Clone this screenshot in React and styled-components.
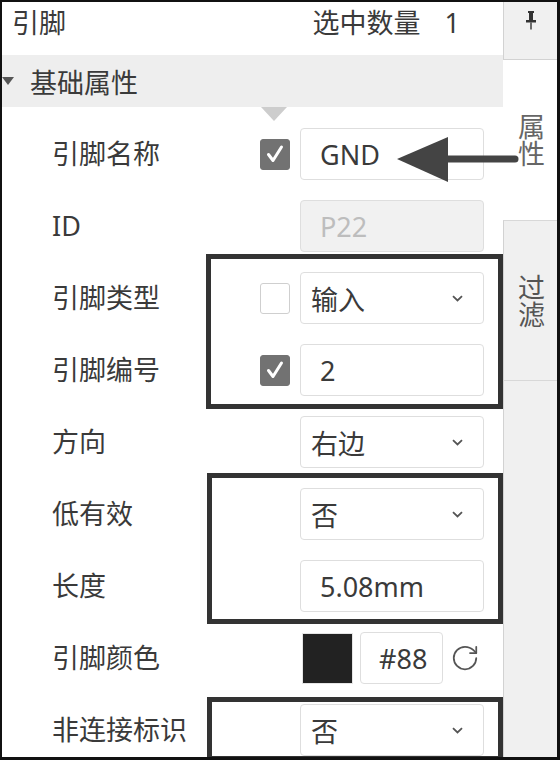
import React from "react";
import styled, { createGlobalStyle } from "styled-components";
import { RotateCw } from "lucide-react";

const Global = createGlobalStyle`
  html, body { margin: 0; padding: 0; background: #fff; }
  body { font-family: "Noto Sans", "Noto Sans CJK SC", sans-serif; }
  * { box-sizing: border-box; }
`;

const Root = styled.div`
  position: relative;
  width: 560px;
  height: 760px;
  border: 2px solid #111;
  border-right-width: 3px;
  border-bottom-width: 3px;
  display: flex;
  overflow: hidden;
  background: #fff;
  font-family: "Noto Sans", "Noto Sans CJK SC", sans-serif;
  font-size: 27px;
  color: #3a3a3a;
`;

const Main = styled.div`
  width: 501px;
  display: flex;
  flex-direction: column;
  & > * { flex-shrink: 0; }
`;

const Header = styled.div`
  height: 53px;
  display: flex;
  justify-content: space-between;
  align-items: flex-start;
  padding: 3px 43px 0 10px;
  line-height: 36px;
`;

const Count = styled.div`
  display: flex;
  gap: 24px;
`;

const Section = styled.div`
  height: 52px;
  background: #eeeeee;
  display: flex;
  align-items: center;
  gap: 16px;
  color: #3a3a3a;
`;

const Caret = styled.span`
  width: 0;
  height: 0;
  border-left: 6px solid transparent;
  border-right: 6px solid transparent;
  border-top: 8px solid #555;
`;

const Rows = styled.div`
  padding-top: 11px;
  display: flex;
  flex-direction: column;
  & > * { flex-shrink: 0; }
`;

const Row = styled.div`
  height: 72px;
  display: grid;
  grid-template-columns: 1fr 30px 184px;
  column-gap: 10px;
  align-items: center;
  padding: 0 19px 0 50px;
`;

const Label = styled.div`
  color: #3a3a3a;
  white-space: nowrap;
  line-height: 36px;
`;

const Check = styled.span`
  width: 30px;
  height: 31px;
  border-radius: 3px;
  display: flex;
  align-items: center;
  justify-content: center;
  background: ${(p) => (p.$on ? "#727272" : "#fff")};
  border: 1px solid ${(p) => (p.$on ? "#727272" : "#cfcfcf")};
`;

const Field = styled.div`
  height: 52px;
  border: 1px solid #dedede;
  border-radius: 4px;
  display: flex;
  align-items: center;
  justify-content: space-between;
  padding: 0 20px 0 ${(p) => (p.$select ? "10px" : "19px")};
  background: ${(p) => (p.$disabled ? "#f1f1f1" : "#fff")};
  color: ${(p) => (p.$disabled ? "#bdbdbd" : "#3a3a3a")};
  white-space: nowrap;
  overflow: hidden;
`;

const ColorCell = styled.div`
  display: flex;
  align-items: center;
  padding-left: 2px;
`;

const Swatch = styled.span`
  width: 51px;
  height: 51px;
  background: #222;
  border: 1px solid #e5e5e5;
`;

const Hex = styled.div`
  margin-left: 7px;
  width: 83px;
  height: 52px;
  border: 1px solid #dedede;
  border-radius: 4px;
  display: flex;
  align-items: center;
  padding-left: 18px;
  overflow: hidden;
  white-space: nowrap;
  color: #3a3a3a;
`;

const Reset = styled.span`
  margin-left: 7px;
  display: flex;
  color: #555;
`;

const Tabs = styled.div`
  width: 54px;
  display: flex;
  flex-direction: column;
  & > * { flex-shrink: 0; }
`;

const PinTab = styled.div`
  height: 58px;
  background: #f0f0f0;
  border-left: 1px solid #d2d2d2;
  border-bottom: 1px solid #d2d2d2;
  display: flex;
  justify-content: center;
  padding-top: 9px;
`;

const Tab = styled.div`
  height: 160px;
  display: flex;
  align-items: center;
  justify-content: center;
  background: ${(p) => (p.$active ? "#fff" : "#f0f0f0")};
  border-left: 1px solid ${(p) => (p.$active ? "#fff" : "#d2d2d2")};
  border-top: ${(p) => (p.$active ? "none" : "1px solid #d8d8d8")};
  color: ${(p) => (p.$active ? "#666" : "#555")};
`;

const TabText = styled.span`
  writing-mode: vertical-rl;
  text-orientation: upright;
  line-height: 1;
`;

const TabRest = styled.div`
  flex: 1 1 auto !important;
  background: #f0f0f0;
  border-left: 1px solid #d2d2d2;
  border-top: 1px solid #d8d8d8;
`;

const Frame = styled.div`
  position: absolute;
  border: 5px solid #333;
  pointer-events: none;
`;

const Pointer = styled.span`
  position: absolute;
  left: 259px;
  top: 105px;
  width: 0;
  height: 0;
  border-left: 13px solid transparent;
  border-right: 13px solid transparent;
  border-top: 14px solid #cdcdcd;
`;

const ArrowSvg = styled.svg`
  position: absolute;
  left: 391px;
  top: 132px;
`;

const Chevron = () => (
  <svg width="11" height="7" viewBox="0 0 11 7">
    <path d="M1 1.2l4.5 4.3L10 1.2" fill="none" stroke="#555" strokeWidth="1.8" />
  </svg>
);

const Tick = () => (
  <svg width="20" height="20" viewBox="0 0 20 20">
    <path d="M3.5 10.5l4.5 6L16.5 3" fill="none" stroke="#fff" strokeWidth="3" strokeLinecap="round" strokeLinejoin="round" />
  </svg>
);

const PinIcon = () => (
  <svg width="10" height="19" viewBox="0 0 10 19">
    <rect x="2" y="0" width="6" height="2" fill="#333" />
    <rect x="3" y="2" width="4" height="7" fill="#333" />
    <rect x="0" y="9" width="10" height="2.5" fill="#333" />
    <rect x="4.3" y="11.5" width="1.4" height="7" fill="#333" />
  </svg>
);

const rows = [
  { label: "引脚名称", check: true, value: "GND" },
  { label: "ID", value: "P22", disabled: true },
  { label: "引脚类型", check: false, value: "输入", select: true },
  { label: "引脚编号", check: true, value: "2" },
  { label: "方向", value: "右边", select: true },
  { label: "低有效", value: "否", select: true },
  { label: "长度", value: "5.08mm" },
  { label: "引脚颜色", color: true },
  { label: "非连接标识", value: "否", select: true },
];

export default function App() {
  return (
    <>
      <Global />
      <Root>
        <Main>
          <Header>
            <span>引脚</span>
            <Count>
              <span>选中数量</span>
              <span>1</span>
            </Count>
          </Header>
          <Section>
            <Caret />
            <span>基础属性</span>
          </Section>
          <Rows>
            {rows.map((r) => (
              <Row key={r.label}>
                <Label>{r.label}</Label>
                {r.check === undefined ? (
                  <span />
                ) : (
                  <Check $on={r.check}>{r.check && <Tick />}</Check>
                )}
                {r.color ? (
                  <ColorCell>
                    <Swatch />
                    <Hex>#88</Hex>
                    <Reset>
                      <RotateCw size={30} strokeWidth={1.4} />
                    </Reset>
                  </ColorCell>
                ) : (
                  <Field $select={r.select} $disabled={r.disabled}>
                    <span>{r.value}</span>
                    {r.select && <Chevron />}
                  </Field>
                )}
              </Row>
            ))}
          </Rows>
        </Main>
        <Tabs>
          <PinTab>
            <PinIcon />
          </PinTab>
          <Tab $active>
            <TabText>属性</TabText>
          </Tab>
          <Tab>
            <TabText>过滤</TabText>
          </Tab>
          <TabRest />
        </Tabs>

        <Pointer />
        <Frame style={{ left: 204, top: 252, width: 297, height: 155 }} />
        <Frame style={{ left: 205, top: 471, width: 296, height: 151 }} />
        <Frame style={{ left: 205, top: 695, width: 296, height: 64 }} />
        <ArrowSvg width="130" height="52" viewBox="0 0 130 52">
          <line x1="50" y1="25" x2="122" y2="25" stroke="#444" strokeWidth="7" strokeLinecap="round" />
          <polygon points="4,25 55,3 55,48" fill="#444" />
        </ArrowSvg>
      </Root>
    </>
  );
}
